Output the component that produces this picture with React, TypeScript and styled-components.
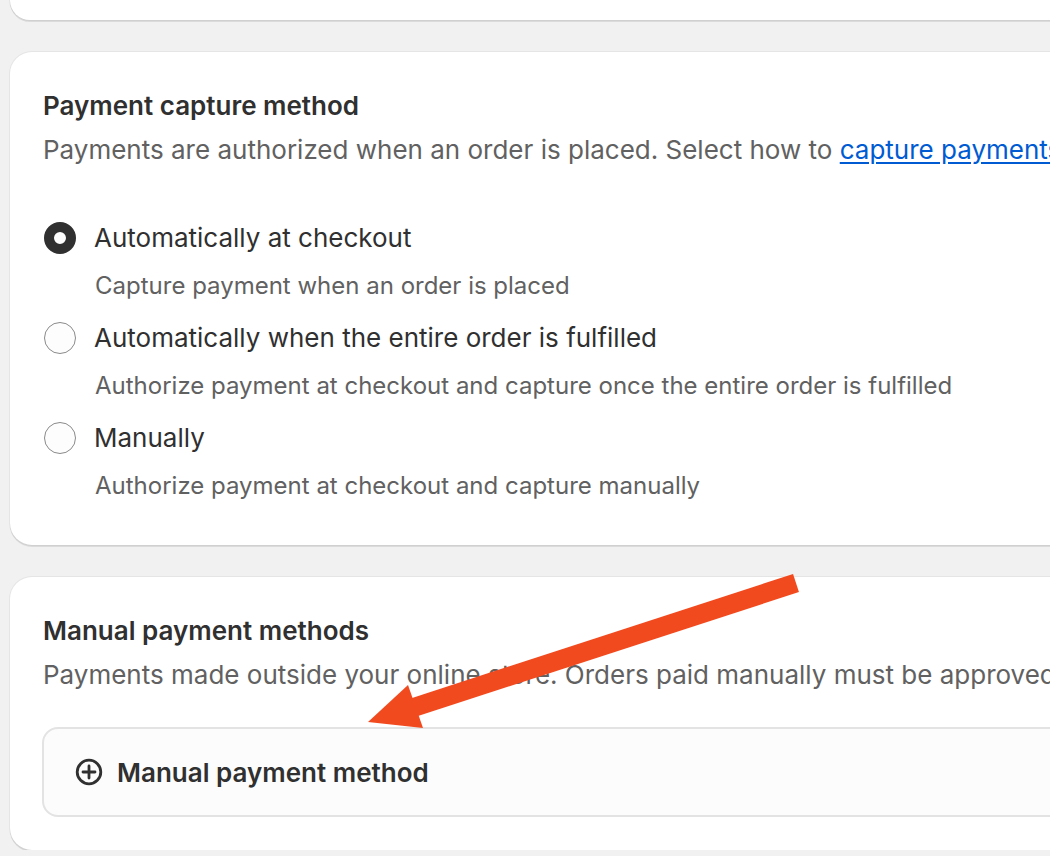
import React from "react";
import styled, { createGlobalStyle } from "styled-components";

const GlobalStyle = createGlobalStyle`
  html, body {
    margin: 0;
    padding: 0;
    background: #f1f1f1;
    overflow: hidden;
    font-family: Inter, "Noto Sans", sans-serif;
  }
`;

const colors = {
  text: "#303030",
  subdued: "#616161",
  link: "#005bd3",
  border: "#8a8a8a",
};

const options = [
  {
    label: "Automatically at checkout",
    help: "Capture payment when an order is placed",
    checked: true,
  },
  {
    label: "Automatically when the entire order is fulfilled",
    help: "Authorize payment at checkout and capture once the entire order is fulfilled",
    checked: false,
  },
  {
    label: "Manually",
    help: "Authorize payment at checkout and capture manually",
    checked: false,
  },
];

const PlusCircle = () => (
  <svg width="28" height="28" viewBox="0 0 28 28" fill="none">
    <circle cx="14" cy="14" r="11.8" stroke={colors.text} strokeWidth="2.8" />
    <path d="M14 8v12M8 14h12" stroke={colors.text} strokeWidth="2.8" strokeLinecap="round" />
  </svg>
);

const Arrow = () => (
  <ArrowSvg width="1050" height="856" viewBox="0 0 1050 856">
    <line x1="796" y1="583" x2="412" y2="708" stroke="#f24a1f" strokeWidth="19" />
    <polygon points="368,722 408,685 423,728" fill="#f24a1f" />
  </ArrowSvg>
);

const App = () => {
  return (
    <>
      <GlobalStyle />
      <Page>
        <Card $tail />

        <Card>
          <Title>Payment capture method</Title>
          <Description>
            Payments are authorized when an order is placed. Select how to{" "}
            <a href="#">capture payments</a>.
          </Description>
          <RadioList>
            {options.map((o) => (
              <RadioItem key={o.label}>
                <RadioRow>
                  <Radio $checked={o.checked} />
                  <RadioLabel>{o.label}</RadioLabel>
                </RadioRow>
                <HelpText>{o.help}</HelpText>
              </RadioItem>
            ))}
          </RadioList>
        </Card>

        <Card $compact>
          <Title>Manual payment methods</Title>
          <Description>
            Payments made outside your online store. Orders paid manually must be approved before being fulfilled.
          </Description>
          <AddBox>
            <PlusCircle />
            <AddLabel>Manual payment method</AddLabel>
          </AddBox>
        </Card>
      </Page>
      <Arrow />
    </>
  );
};

const Page = styled.div`
  width: 1160px;
  padding: 0 0 0 10px;
  display: flex;
  flex-direction: column;
  gap: 32px;
`;

const Card = styled.section<{ $tail?: boolean; $compact?: boolean }>`
  background: #ffffff;
  border-radius: ${(p) => (p.$tail ? "0 0 22px 22px" : "22px")};
  height: ${(p) => (p.$tail ? "20px" : "auto")};
  padding: ${(p) => (p.$tail ? "0" : p.$compact ? "34px 33px 33px" : "34px 33px 39px")};
  box-shadow: 0 2px 0 0 rgba(26, 26, 26, 0.1), 0 0 0 1px rgba(26, 26, 26, 0.05);
  box-sizing: border-box;
`;

const Title = styled.h2`
  margin: 0;
  font-size: 26px;
  line-height: 40px;
  font-weight: 600;
  color: ${colors.text};
`;

const Description = styled.p`
  margin: 4px 0 0;
  font-size: 26px;
  line-height: 40px;
  color: ${colors.subdued};
  white-space: nowrap;

  a {
    color: ${colors.link};
    text-decoration: underline;
    text-underline-offset: 3px;
  }
`;

const RadioList = styled.div`
  margin-top: 48px;
  display: flex;
  flex-direction: column;
  gap: 12px;
`;

const RadioItem = styled.div`
  display: flex;
  flex-direction: column;
  gap: 8px;
`;

const RadioRow = styled.label`
  display: flex;
  align-items: center;
  gap: 18px;
  height: 40px;
  margin-left: 1px;
`;

const Radio = styled.span<{ $checked: boolean }>`
  box-sizing: border-box;
  width: 32px;
  height: 32px;
  border-radius: 50%;
  flex-shrink: 0;
  background: #fdfdfd;
  border: ${(p) => (p.$checked ? `10px solid ${colors.text}` : `1.6px solid ${colors.border}`)};
`;

const RadioLabel = styled.span`
  font-size: 26px;
  line-height: 40px;
  color: ${colors.text};
  white-space: nowrap;
`;

const HelpText = styled.div`
  padding-left: 52px;
  font-size: 24px;
  line-height: 40px;
  color: ${colors.subdued};
  white-space: nowrap;
`;

const AddBox = styled.div`
  margin-top: 32px;
  height: 90px;
  box-sizing: border-box;
  border: 2px solid #e3e3e3;
  border-radius: 16px;
  background: #fcfcfc;
  display: flex;
  align-items: center;
  gap: 14px;
  padding-left: 31px;
  margin-left: -1px;
`;

const AddLabel = styled.span`
  font-size: 26px;
  font-weight: 600;
  color: ${colors.text};
  white-space: nowrap;
`;

const ArrowSvg = styled.svg`
  position: absolute;
  top: 0;
  left: 0;
  pointer-events: none;
`;

export default App;
